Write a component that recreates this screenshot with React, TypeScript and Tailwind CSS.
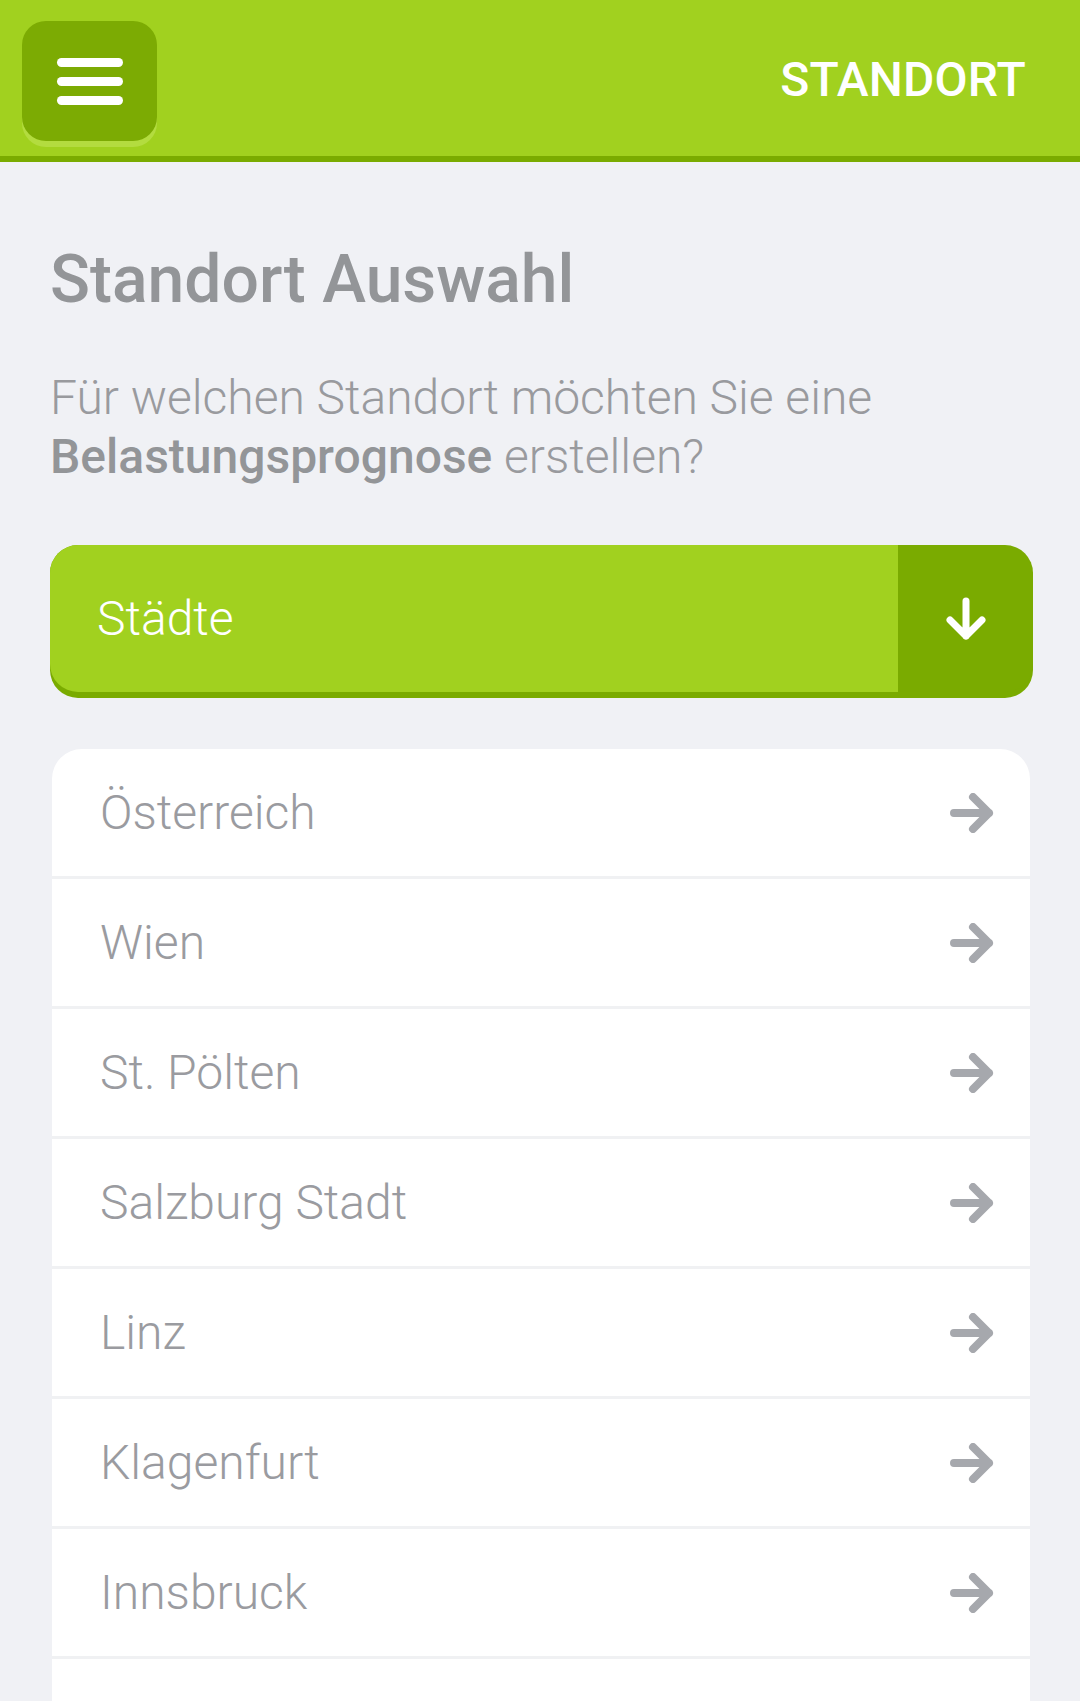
import React from "react";

const cities = [
  "Österreich",
  "Wien",
  "St. Pölten",
  "Salzburg Stadt",
  "Linz",
  "Klagenfurt",
  "Innsbruck",
];

function ArrowRight() {
  return (
    <svg width="44" height="40" viewBox="0 0 44 40" fill="none">
      <path
        d="M4 20 H39 M23 4 L39 20 L23 36"
        stroke="#a6a8ad"
        strokeWidth="8"
        strokeLinecap="round"
        strokeLinejoin="round"
      />
    </svg>
  );
}

function ArrowDown() {
  return (
    <svg width="40" height="44" viewBox="0 0 40 44" fill="none">
      <path
        d="M20 4 V39 M4 23 L20 39 L36 23"
        stroke="#ffffff"
        strokeWidth="7"
        strokeLinecap="round"
        strokeLinejoin="round"
      />
    </svg>
  );
}

export default function App() {
  return (
    <div className="min-h-screen bg-[#f0f1f5] font-['Roboto',sans-serif]">
      <header className="h-[162px] bg-[#a1d11f] border-b-[6px] border-[#7aab00] flex items-start justify-between pl-[22px] pr-[54px] pt-[21px]">
        <button className="w-[135px] h-[120px] rounded-[24px] bg-[#7cab03] shadow-[0_6px_0_#b3dc3f] flex flex-col items-center justify-center gap-[10px]">
          <span className="block w-[66px] h-[9px] rounded-full bg-white" />
          <span className="block w-[66px] h-[9px] rounded-full bg-white" />
          <span className="block w-[66px] h-[9px] rounded-full bg-white" />
        </button>
        <div className="mt-[35px] text-[48px] leading-[48px] font-medium text-white tracking-[0.2px]">
          STANDORT
        </div>
      </header>

      <main className="pl-[50px] pr-[50px]">
        <h1 className="mt-[85px] text-[66px] leading-[66px] font-medium text-[#939598]">
          Standort Auswahl
        </h1>
        <p className="mt-[55px] text-[48px] leading-[59px] font-light text-[#999a9e]">
          Für welchen Standort möchten Sie eine{" "}
          <span className="font-medium text-[#939598]">Belastungsprognose</span>{" "}
          erstellen?
        </p>

        <div className="mt-[59px] -mr-[3px] h-[147px] rounded-[28px] bg-[#7aab00] shadow-[0_6px_0_#7aab00] flex overflow-hidden">
          <div className="flex-1 bg-[#a1d11f] flex items-center pl-[47px] text-[48px] font-light text-white">
            Städte
          </div>
          <div className="w-[135px] flex items-center justify-center">
            <ArrowDown />
          </div>
        </div>

        <div className="mt-[57px] ml-[2px] bg-white rounded-t-[30px] overflow-hidden">
          {cities.map((c) => (
            <div
              key={c}
              className="h-[130px] border-b-[3px] border-[#f0f1f3] flex items-center justify-between pl-[48px] pr-[36px]"
            >
              <span className="text-[48px] font-light text-[#9a9ba0]">{c}</span>
              <ArrowRight />
            </div>
          ))}
          <div className="h-[130px] border-b-[3px] border-[#f0f1f3]" />
        </div>
      </main>
    </div>
  );
}
